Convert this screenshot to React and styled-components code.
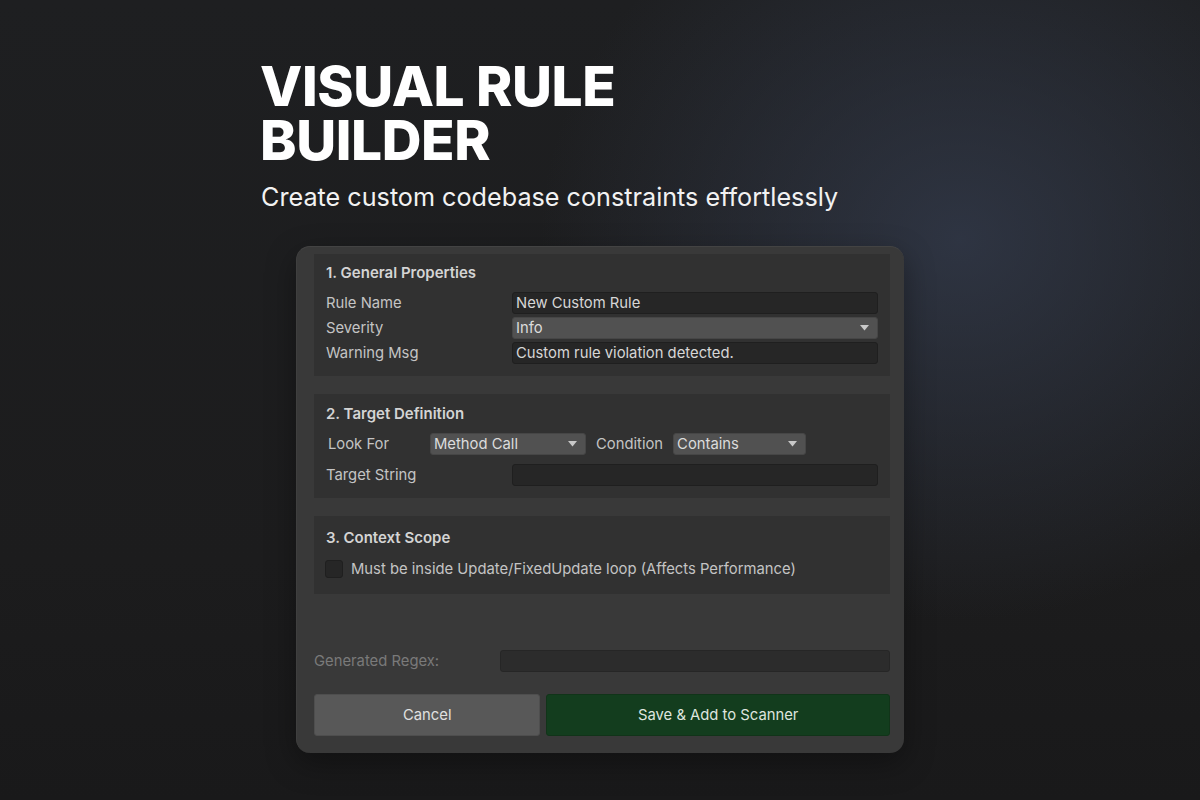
import React from 'react';
import styled, { createGlobalStyle } from 'styled-components';

const GlobalStyle = createGlobalStyle`
  html, body {
    margin: 0;
    padding: 0;
    background: #1c1c1e;
  }
  * {
    box-sizing: border-box;
  }
`;

const Page = styled.div`
  width: 1200px;
  height: 800px;
  overflow: hidden;
  padding: 59px 0 0 260px;
  display: flex;
  flex-direction: column;
  font-family: Inter, "Noto Sans", sans-serif;
  background:
    radial-gradient(ellipse 420px 380px at 80% 30%, rgba(52, 60, 78, 0.75), rgba(44, 50, 62, 0) 100%),
    linear-gradient(180deg, #1e1f21 0%, #1c1c1d 70%, #19191a 100%);
`;

const Title = styled.h1`
  margin: 0;
  color: #ffffff;
  font-size: 55px;
  line-height: 54px;
  font-weight: 800;
  letter-spacing: -0.4px;
`;

const Subtitle = styled.p`
  margin: 14px 0 0 1px;
  color: #f2f2f2;
  font-size: 25.2px;
  line-height: 32px;
  font-weight: 400;
`;

const Panel = styled.div`
  margin: 33px 0 0 36px;
  width: 608px;
  height: 507px;
  padding: 7px 14px 17px 17px;
  background: #393939;
  border-radius: 14px;
  border-top: 1px solid #434343;
  border-left: 1px solid #3f3f3f;
  box-shadow: 0 10px 30px rgba(0, 0, 0, 0.35);
  display: flex;
  flex-direction: column;
`;

const Section = styled.div`
  background: #313131;
  padding: ${p => p.$pad || '10px 12px 12px 12px'};
  margin-bottom: 18px;
  display: flex;
  flex-direction: column;
`;

const Heading = styled.div`
  color: #d4d4d4;
  font-size: 15px;
  font-weight: 600;
  line-height: 18px;
  margin-bottom: ${p => p.$gap || '10px'};
`;

const Grid = styled.div`
  display: grid;
  grid-template-columns: 186px 1fr;
  row-gap: ${p => p.$gap || '3px'};
  align-items: center;
`;

const Label = styled.div`
  font-size: 14.8px;
  line-height: 22px;
  white-space: nowrap;
  width: ${p => p.$width || 'auto'};
  padding-left: ${p => p.$indent || '0'};
  color: ${p => (p.$dim ? '#7a7a7a' : '#c4c4c4')};
`;

const Input = styled.div`
  height: 22px;
  background: #262626;
  border: 1px solid #1f1f1f;
  border-radius: 3px;
  color: #d6d6d6;
  font-size: 14.8px;
  line-height: 20px;
  padding: 0 3px;
  white-space: nowrap;
`;

const Dropdown = styled.div`
  height: 22px;
  width: ${p => p.$width || 'auto'};
  background: #515151;
  border: 1px solid #464646;
  border-radius: 3px;
  color: #dcdcdc;
  font-size: 14.8px;
  line-height: 20px;
  padding: 0 8px 0 3px;
  display: flex;
  align-items: center;
  justify-content: space-between;
`;

const Arrow = () => (
  <svg width="9" height="6" viewBox="0 0 9 6">
    <path d="M0 0 H9 L4.5 5.5 Z" fill="#c8c8c8" />
  </svg>
);

const InlineRow = styled.div`
  display: flex;
  align-items: center;
  gap: 10px;
  margin-bottom: 9px;
`;

const CheckRow = styled.div`
  display: flex;
  align-items: center;
  gap: 8px;
  margin-left: -1px;
`;

const Checkbox = styled.div`
  width: 18px;
  height: 18px;
  background: #262626;
  border: 1px solid #1f1f1f;
  border-radius: 3px;
`;

const Spacer = styled.div`
  flex: 1;
`;

const RegexRow = styled.div`
  display: grid;
  grid-template-columns: 186px 1fr;
  align-items: center;
  margin-bottom: 22px;
`;

const RegexInput = styled(Input)`
  background: #2c2c2c;
  border-color: #262626;
`;

const Buttons = styled.div`
  display: flex;
  gap: 6px;
  height: 42px;
`;

const Button = styled.div`
  flex: ${p => p.$flex};
  background: ${p => (p.$primary ? '#133d1e' : '#585858')};
  border: 1px solid ${p => (p.$primary ? '#113419' : '#4e4e4e')};
  border-radius: 3px;
  color: ${p => (p.$primary ? '#dfe5df' : '#e0e0e0')};
  font-size: 14.8px;
  display: flex;
  align-items: center;
  justify-content: center;
`;

export default function App() {
  return (
    <>
      <GlobalStyle />
      <Page>
        <Title>
          VISUAL RULE
          <br />
          BUILDER
        </Title>
        <Subtitle>Create custom codebase constraints effortlessly</Subtitle>
        <Panel>
          <Section>
            <Heading>1. General Properties</Heading>
            <Grid>
              <Label>Rule Name</Label>
              <Input>New Custom Rule</Input>
              <Label>Severity</Label>
              <Dropdown>
                Info
                <Arrow />
              </Dropdown>
              <Label>Warning Msg</Label>
              <Input>Custom rule violation detected.</Input>
            </Grid>
          </Section>
          <Section $pad="11px 12px 12px 12px">
            <Heading>2. Target Definition</Heading>
            <InlineRow>
              <Label $indent="2px" $width="94px">Look For</Label>
              <Dropdown $width="156px">
                Method Call
                <Arrow />
              </Dropdown>
              <Label>Condition</Label>
              <Dropdown $width="133px">
                Contains
                <Arrow />
              </Dropdown>
            </InlineRow>
            <Grid>
              <Label>Target String</Label>
              <Input />
            </Grid>
          </Section>
          <Section $pad="13px 12px 14px 12px">
            <Heading $gap="11px">3. Context Scope</Heading>
            <CheckRow>
              <Checkbox />
              <Label>Must be inside Update/FixedUpdate loop (Affects Performance)</Label>
            </CheckRow>
          </Section>
          <Spacer />
          <RegexRow>
            <Label $dim>Generated Regex:</Label>
            <RegexInput />
          </RegexRow>
          <Buttons>
            <Button $flex="226">Cancel</Button>
            <Button $flex="344" $primary>Save &amp; Add to Scanner</Button>
          </Buttons>
        </Panel>
      </Page>
    </>
  );
}
